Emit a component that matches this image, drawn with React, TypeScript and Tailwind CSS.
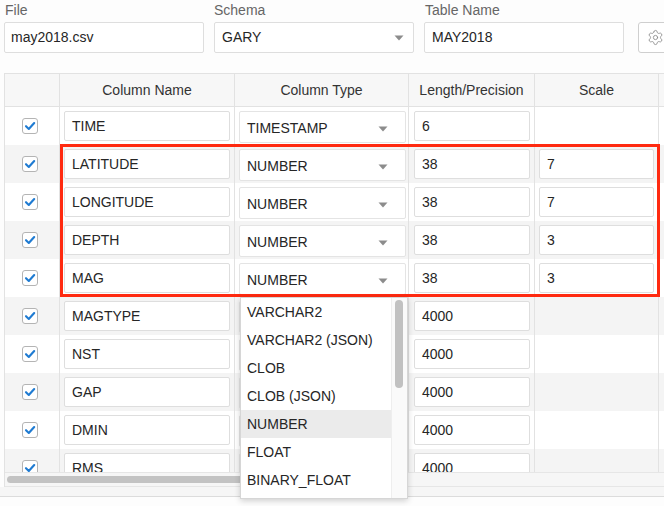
import { Settings } from "lucide-react";

type Col = { name: string; type: string; len: string; scale: string };

// rows past MAG sit under the open type list, so their select shows no label
const rows: Col[] = [
  { name: "TIME", type: "TIMESTAMP", len: "6", scale: "" },
  { name: "LATITUDE", type: "NUMBER", len: "38", scale: "7" },
  { name: "LONGITUDE", type: "NUMBER", len: "38", scale: "7" },
  { name: "DEPTH", type: "NUMBER", len: "38", scale: "3" },
  { name: "MAG", type: "NUMBER", len: "38", scale: "3" },
  { name: "MAGTYPE", type: "", len: "4000", scale: "" },
  { name: "NST", type: "", len: "4000", scale: "" },
  { name: "GAP", type: "", len: "4000", scale: "" },
  { name: "DMIN", type: "", len: "4000", scale: "" },
  { name: "RMS", type: "", len: "4000", scale: "" },
];

const typeOptions = ["VARCHAR2", "VARCHAR2 (JSON)", "CLOB", "CLOB (JSON)", "NUMBER", "FLOAT", "BINARY_FLOAT"];

function Caret() {
  return (
    <svg width="10" height="6" viewBox="0 0 10 6" className="shrink-0">
      <polygon points="0.5,0.5 9.5,0.5 5,5.5" fill="#8c8c8c" />
    </svg>
  );
}

function Check() {
  return (
    <div className="flex h-[16px] w-[16px] items-center justify-center rounded-[3px] border border-[#b4b4b4] bg-white">
      <svg width="12" height="12" viewBox="0 0 12 12">
        <path d="M2 6.2 L4.8 9 L10.2 3" fill="none" stroke="#1f7bd2" strokeWidth="2.1" strokeLinecap="round" strokeLinejoin="round" />
      </svg>
    </div>
  );
}

function Box(props: { value: string; className?: string }) {
  return (
    <div className={`flex h-[30px] items-center rounded-[2px] border border-[#dedede] bg-white pl-[7px] text-[#262626] ${props.className ?? ""}`}>
      {props.value}
    </div>
  );
}

export default function App() {
  return (
    <div className="relative h-[506px] w-[664px] overflow-hidden bg-[#fdfdfd] text-[14px] text-[#262626]" style={{ fontFamily: '"Liberation Sans", Arial, sans-serif' }}>
      {/* top fields */}
      <div className="flex pl-[4px]">
        <div className="w-[200px] shrink-0">
          <div className="h-[22px] pl-[1px] leading-[20px] text-[#666]">File</div>
          <div className="flex h-[31px] items-center rounded-[2px] border border-[#dedede] bg-white pl-[6px]">may2018.csv</div>
        </div>
        <div className="ml-[10px] w-[200px] shrink-0">
          <div className="h-[22px] leading-[20px] text-[#666]">Schema</div>
          <div className="flex h-[31px] items-center justify-between rounded-[2px] border border-[#dedede] bg-white pl-[7px] pr-[9px]">
            <span>GARY</span>
            <Caret />
          </div>
        </div>
        <div className="ml-[10px] w-[200px] shrink-0">
          <div className="h-[22px] pl-[1px] leading-[20px] text-[#666]">Table Name</div>
          <div className="flex h-[31px] items-center rounded-[2px] border border-[#dedede] bg-white pl-[7px]">MAY2018</div>
        </div>
        <div className="ml-[14px] mt-[22px] flex h-[31px] w-[34px] shrink-0 items-center rounded-[3px] border border-[#cfcfcf] bg-white pl-[8px]">
          <Settings size={17} strokeWidth={1.2} color="#8a8a8a" />
        </div>
      </div>

      {/* table */}
      <div className="ml-[4px] mt-[20px] w-[780px] border-l border-t border-[#e2e2e2]">
        <div className="flex h-[33px] border-b border-[#e2e2e2] bg-[#f7f7f7] text-[#333]">
          <div className="w-[55px] shrink-0 border-r border-[#e2e2e2]" />
          <div className="flex w-[175px] shrink-0 items-center justify-center border-r border-[#e2e2e2]">Column Name</div>
          <div className="flex w-[174px] shrink-0 items-center justify-center border-r border-[#e2e2e2]">Column Type</div>
          <div className="flex w-[126px] shrink-0 items-center justify-center border-r border-[#e2e2e2]">Length/Precision</div>
          <div className="flex w-[124px] shrink-0 items-center justify-center border-r border-[#e2e2e2]">Scale</div>
          <div className="flex-1" />
        </div>
        <div className="h-[365px] overflow-hidden">
          {rows.map((r, i) => (
            <div key={r.name} className={`flex h-[38px] ${i % 2 === 1 ? "bg-[#f4f4f4]" : "bg-white"}`}>
              <div className="flex w-[55px] shrink-0 items-center border-r border-[#e2e2e2] pl-[17px]">
                <Check />
              </div>
              <div className="w-[175px] shrink-0 border-r border-[#e2e2e2] px-[4px] pt-[4px]">
                <Box value={r.name} />
              </div>
              <div className="w-[174px] shrink-0 border-r border-[#e2e2e2] pl-[4px] pr-[2px] pt-[4px]">
                <div className="flex h-[32px] items-center justify-between rounded-[2px] border border-[#e4e4e4] bg-white pl-[7px] pr-[17px] pt-[3px]">
                  <span>{r.type}</span>
                  <Caret />
                </div>
              </div>
              <div className="w-[126px] shrink-0 border-r border-[#e2e2e2] pl-[5px] pr-[4px] pt-[4px]">
                <Box value={r.len} />
              </div>
              <div className="w-[124px] shrink-0 border-r border-[#e2e2e2] px-[4px] pt-[4px]">
                {r.scale ? <Box value={r.scale} /> : null}
              </div>
              <div className="flex-1" />
            </div>
          ))}
        </div>
        <div className="h-[15px] border-b border-t border-[#e6e6e6] bg-[#f6f6f6] pl-[2px] pt-[3px]">
          <div className="h-[7px] w-[300px] rounded-full bg-[#c3c3c3]" />
        </div>
      </div>
      <div className="h-[10px] border-b border-[#dcdcdc] bg-[#f6f6f6]" />

      {/* highlight box */}
      <div className="absolute left-[60px] top-[144px] h-[153px] w-[600px] border-[3px] border-[#ff2a10]" />

      {/* open type dropdown */}
      <div className="absolute left-[240px] top-[297px] flex h-[202px] w-[168px] border border-[#d6d6d6] bg-white shadow-[0_2px_6px_rgba(0,0,0,0.18)]">
        <div className="flex-1">
          {typeOptions.map((o) => (
            <div key={o} className={`h-[28px] pl-[6px] leading-[28px] text-[#262626] ${o === "NUMBER" ? "bg-[#ebebeb]" : ""}`}>
              {o}
            </div>
          ))}
        </div>
        <div className="w-[16px] border-l border-[#eeeeee] bg-[#fafafa] pl-[3px] pt-[2px]">
          <div className="h-[88px] w-[8px] rounded-full bg-[#c1c1c1]" />
        </div>
      </div>
    </div>
  );
}
